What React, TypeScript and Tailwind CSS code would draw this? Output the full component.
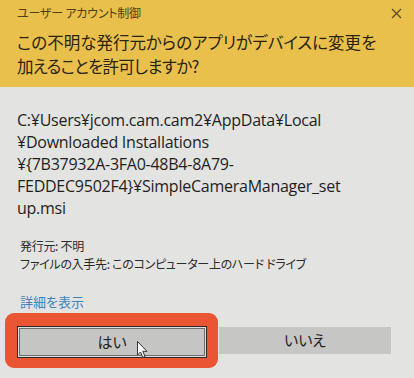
import React from "react";

const jp = "font-['Noto_Sans_CJK_JP','Noto_Sans',sans-serif] [font-feature-settings:'palt']";

export default function App() {
  return (
    <div className={`relative w-[414px] h-[378px] overflow-hidden bg-[#e3e3e1] ${jp}`}>
      <div className="h-[87px] bg-[#e8c04b] px-[17px] pt-[3px]">
        <div className="flex justify-between items-center h-[20px]">
          <span className="text-[12px] text-[#4d3f1f] tracking-[-0.2px]">ユーザー アカウント制御</span>
          <svg width="11" height="11" viewBox="0 0 11 11" className="mr-[-5px]">
            <path d="M1 1 L10 10 M10 1 L1 10" stroke="#5a4820" strokeWidth="1.2" />
          </svg>
        </div>
        <div className="mt-[7px] text-[16.5px] leading-[24px] text-[#2b2414] whitespace-nowrap">
          <div>この不明な発行元からのアプリがデバイスに変更を</div>
          <div className="tracking-[-0.7px]">加えることを許可しますか?</div>
        </div>
      </div>
      <div className="pt-[22px] px-[17px] text-[#1e1e1e]">
        <div className="font-['Open_Sans','Noto_Sans',sans-serif] text-[16px] leading-[22px] tracking-[-0.25px] whitespace-nowrap">
          <div>C:¥Users¥jcom.cam.cam2¥AppData¥Local</div>
          <div>¥Downloaded Installations</div>
          <div>¥{"{"}7B37932A-3FA0-48B4-8A79-</div>
          <div>FEDDEC9502F4{"}"}¥SimpleCameraManager_set</div>
          <div>up.msi</div>
        </div>
        <div className="mt-[18px] pl-[3px] text-[12px] leading-[18px] tracking-[-0.3px] text-[#2a2a2a] whitespace-nowrap">
          <div>発行元: 不明</div>
          <div>ファイルの入手先: このコンピューター上のハード ドライブ</div>
        </div>
        <div className="mt-[20px] pl-[3px] text-[13px] leading-[18px] text-[#3b85bb]">詳細を表示</div>
      </div>
      <div className="mt-[2px] flex items-start">
        <div className="ml-[5px] w-[213px] h-[55px] rounded-[9px] bg-[#ea5634] pt-[13px] pl-[12px]">
          <div className="w-[190px] h-[32px] border border-[#2a2a2a] bg-[#dedede] p-[1px]">
            <div className="h-full w-full border border-[#6e6e6e] bg-[#c5c5c3] flex items-center justify-center text-[15px] text-[#222]">
              はい
            </div>
          </div>
        </div>
        <div className="mt-[14px] ml-[1px] w-[172px] h-[27px] bg-[#c6c6c4] flex items-center justify-center text-[15px] text-[#222]">
          いいえ
        </div>
      </div>
      <svg className="absolute left-[137px] top-[341px]" width="12" height="18" viewBox="0 0 12 18">
        <path d="M0.5 0.5 L0.5 14 L3.5 11 L5.8 16.5 L8 15.5 L5.8 10.3 L10 10.3 Z" fill="#fafafa" stroke="#333" strokeWidth="1" strokeLinejoin="round" />
      </svg>
    </div>
  );
}
